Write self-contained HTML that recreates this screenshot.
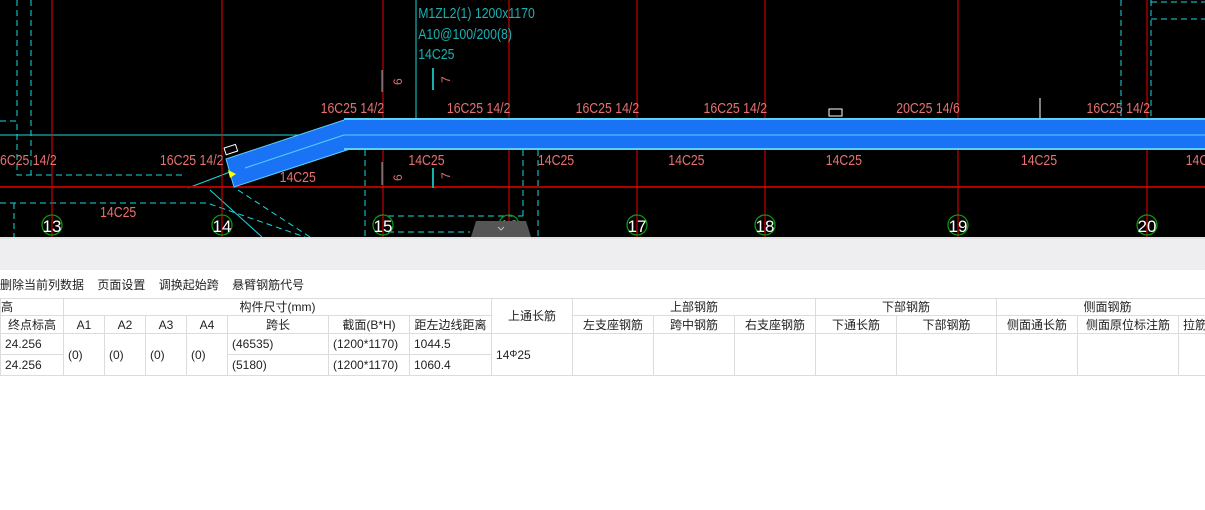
<!DOCTYPE html>
<html><head><meta charset="utf-8"><style>
*{margin:0;padding:0;box-sizing:border-box}
body{width:1205px;height:510px;background:#fff;overflow:hidden;font-family:"Liberation Sans","Noto Sans CJK SC",sans-serif;position:relative}
#cad{position:absolute;left:0;top:0}
#bar{position:absolute;left:0;top:237px;width:1205px;height:33px;background:#eeeef0;border-top:2px solid #e2e2e4}
#tb{position:absolute;left:0;top:276px;font-size:12px;color:#222;white-space:nowrap}
#tb span{margin-right:10px}
table{position:absolute;left:0;top:298px;width:1218px;border-collapse:collapse;font-size:12px;line-height:14px;color:#222;table-layout:fixed}
td{border:1px solid #dcdcdc;height:17px;padding:0 4px;white-space:nowrap;overflow:hidden;text-align:center}
tr.h2 td{height:18px}
.d td{height:21px;text-align:left}
</style></head><body>
<svg id="cad" width="1205" height="237" viewBox="0 0 1205 237" font-family="Liberation Sans Narrow, Liberation Sans, sans-serif">
<rect width="1205" height="237" fill="#000"/>
<g stroke="#1ad8dc" stroke-width="1" fill="none" stroke-dasharray="6,4">
<line x1="17" y1="0" x2="17" y2="120"/><line x1="31" y1="0" x2="31" y2="175"/>
<path d="M0 121H17V175H185"/>
<path d="M0 203H207L305 237"/><line x1="14" y1="203" x2="14" y2="237"/>
<line x1="238" y1="190" x2="310" y2="237"/>
<line x1="365" y1="150" x2="365" y2="237"/><line x1="523" y1="150" x2="523" y2="216"/>
<line x1="538" y1="150" x2="538" y2="237"/><path d="M388 216H523"/><line x1="388" y1="232" x2="470" y2="232"/>
<line x1="1121" y1="0" x2="1121" y2="118"/><line x1="1151" y1="0" x2="1151" y2="120"/>
<path d="M1151 2H1205M1151 19H1205"/>
</g>
<g stroke="#1ad8dc" fill="none"><line x1="0" y1="135" x2="344" y2="135"/><line x1="188" y1="188" x2="230" y2="172"/><line x1="210" y1="190" x2="262" y2="237"/>
<line x1="416" y1="0" x2="416" y2="133"/><circle cx="416" cy="133" r="3" stroke="#e87070"/></g>
<line x1="0" y1="187" x2="1205" y2="187" stroke="#b00000" stroke-width="2"/>
<g stroke="#e00" stroke-width="1"><line x1="52" y1="0" x2="52" y2="237"/><line x1="222" y1="0" x2="222" y2="237"/><line x1="383" y1="0" x2="383" y2="237"/><line x1="509" y1="0" x2="509" y2="237"/><line x1="637" y1="0" x2="637" y2="237"/><line x1="765" y1="0" x2="765" y2="237"/><line x1="958" y1="0" x2="958" y2="237"/><line x1="1147" y1="0" x2="1147" y2="237"/></g>
<polygon points="226,159 344,120 350,149 234,187" fill="#1a73f5" stroke="#5ad0ff"/>
<rect x="344" y="119" width="861" height="30" fill="#1a73f5"/>
<line x1="344" y1="119" x2="1205" y2="119" stroke="#5ad0ff" stroke-width="2"/><line x1="344" y1="149" x2="1205" y2="149" stroke="#5ad0ff" stroke-width="2"/>
<line x1="344" y1="135" x2="1205" y2="135" stroke="#5ad0ff"/><line x1="245" y1="168" x2="344" y2="135" stroke="#5ad0ff"/>
<rect x="829" y="109" width="13" height="7" fill="none" stroke="#fff"/>
<line x1="1040" y1="98" x2="1040" y2="118" stroke="#fff"/>
<g fill="#e87070" font-size="15" transform="scale(0.82,1)">
<text x="0" y="165">6C25 14/2</text><text x="195" y="165">16C25 14/2</text><text x="341" y="182">14C25</text><text x="122" y="217">14C25</text>
<text x="391" y="113">16C25 14/2</text><text x="545" y="113">16C25 14/2</text><text x="702" y="113">16C25 14/2</text><text x="858" y="113">16C25 14/2</text><text x="1093" y="113">20C25 14/6</text><text x="1325" y="113">16C25 14/2</text>
<text x="498" y="165">14C25</text><text x="656" y="165">14C25</text><text x="815" y="165">14C25</text><text x="1007" y="165">14C25</text><text x="1245" y="165">14C25</text><text x="1446" y="165">14C</text>
</g>
<g fill="#1ab0b0" font-size="15" transform="scale(0.82,1)"><text x="510" y="18">M1ZL2(1) 1200x1170</text><text x="510" y="39">A10@100/200(8)</text><text x="510" y="59">14C25</text></g>
<g stroke="#1ab0b0" stroke-width="2"><line x1="433" y1="68" x2="433" y2="90"/><line x1="433" y1="168" x2="433" y2="188"/></g>
<g stroke="#1ad8dc"><line x1="382" y1="70" x2="382" y2="92"/><line x1="382" y1="162" x2="382" y2="185"/></g>
<g fill="#e87070" font-size="12"><text x="393" y="84" transform="rotate(-90 398 80)">6</text><text x="443" y="84" transform="rotate(-90 446 80)">7</text><text x="393" y="180" transform="rotate(-90 398 176)">6</text><text x="443" y="180" transform="rotate(-90 446 176)">7</text></g>
<g fill="none" stroke="#0c9a0c" stroke-width="1.3"><circle cx="52" cy="225" r="10"/><circle cx="222" cy="225" r="10"/><circle cx="383" cy="225" r="10"/><circle cx="509" cy="225" r="10"/><circle cx="637" cy="225" r="10"/><circle cx="765" cy="225" r="10"/><circle cx="958" cy="225" r="10"/><circle cx="1147" cy="225" r="10"/></g>
<g fill="#fff" font-size="17" text-anchor="middle"><text x="52" y="232">13</text><text x="222" y="232">14</text><text x="383" y="232">15</text><text x="509" y="232">16</text><text x="637" y="232">17</text><text x="765" y="232">18</text><text x="958" y="232">19</text><text x="1147" y="232">20</text></g>
<polygon points="476,221 526,221 531,237 471,237" fill="#555"/>
<path d="M498 227l3 3 3-3" stroke="#bbb" fill="none"/>
<polygon points="228,170 236,174 230,178" fill="#ff0"/>
<rect x="225" y="146" width="12" height="7" fill="none" stroke="#fff" transform="rotate(-18 231 150)"/>
</svg>
<div id="bar"></div>
<div id="tb"><span>删除当前列数据</span> <span>页面设置</span> <span>调换起始跨</span> <span>悬臂钢筋代号</span></div>
<table>
<colgroup><col style="width:63px"><col style="width:41px"><col style="width:41px"><col style="width:41px"><col style="width:41px"><col style="width:101px"><col style="width:81px"><col style="width:82px"><col style="width:81px"><col style="width:81px"><col style="width:81px"><col style="width:81px"><col style="width:81px"><col style="width:100px"><col style="width:81px"><col style="width:101px"><col style="width:40px"></colgroup>
<tr><td style="text-align:left;padding:0">高</td><td colspan="7">构件尺寸(mm)</td><td rowspan="2">上通长筋</td><td colspan="3">上部钢筋</td><td colspan="2">下部钢筋</td><td colspan="3">侧面钢筋</td></tr>
<tr class="h2"><td>终点标高</td><td>A1</td><td>A2</td><td>A3</td><td>A4</td><td>跨长</td><td>截面(B*H)</td><td>距左边线距离</td><td>左支座钢筋</td><td>跨中钢筋</td><td>右支座钢筋</td><td>下通长筋</td><td>下部钢筋</td><td>侧面通长筋</td><td>侧面原位标注筋</td><td style="text-align:left">拉筋</td></tr>
<tr class="d"><td>24.256</td><td rowspan="2">(0)</td><td rowspan="2">(0)</td><td rowspan="2">(0)</td><td rowspan="2">(0)</td><td>(46535)</td><td>(1200*1170)</td><td>1044.5</td><td rowspan="2">14<span style="font-size:10px;vertical-align:2px">Φ</span>25</td><td rowspan="2"></td><td rowspan="2"></td><td rowspan="2"></td><td rowspan="2"></td><td rowspan="2"></td><td rowspan="2"></td><td rowspan="2"></td><td rowspan="2"></td></tr>
<tr class="d"><td>24.256</td><td>(5180)</td><td>(1200*1170)</td><td>1060.4</td></tr>
</table>
</body></html>
